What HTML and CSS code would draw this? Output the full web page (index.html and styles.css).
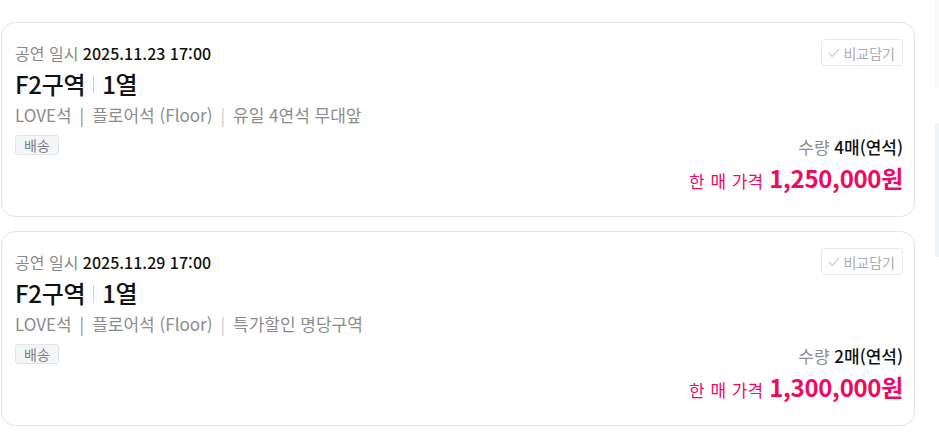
FILE: index.html
```html
<!DOCTYPE html>
<html lang="ko">
<head>
<meta charset="utf-8">
<link rel="stylesheet" href="styles.css">
</head>
<body>
<div class="page">
  <div class="list">
    <div class="card">
      <div class="info">
        <div class="date"><span class="label">공연 일시</span> <span class="value">2025.11.23 17:00</span></div>
        <div class="title">F2구역<span class="bar"></span>1열</div>
        <div class="sub">LOVE석<span class="pipe">|</span>플로어석 (Floor)<span class="pipe thin">|</span>유일 4연석 무대앞</div>
        <div class="tags"><span class="tag">배송</span></div>
      </div>
      <div class="side">
        <button class="compare"><svg class="check" viewBox="0 0 12 10" width="12" height="10"><path d="M1 5.2 L4.3 8.3 L11 1.3" fill="none" stroke="#d4d7dc" stroke-width="1.6"/></svg>비교담기</button>
        <div class="price-box">
          <div class="qty"><span class="qlabel">수량</span> <span class="qval">4매(연석)</span></div>
          <div class="price"><span class="plabel">한 매 가격</span> <span class="pval">1,250,000원</span></div>
        </div>
      </div>
    </div>
    <div class="card">
      <div class="info">
        <div class="date"><span class="label">공연 일시</span> <span class="value">2025.11.29 17:00</span></div>
        <div class="title">F2구역<span class="bar"></span>1열</div>
        <div class="sub">LOVE석<span class="pipe">|</span>플로어석 (Floor)<span class="pipe thin">|</span>특가할인 명당구역</div>
        <div class="tags"><span class="tag">배송</span></div>
      </div>
      <div class="side">
        <button class="compare"><svg class="check" viewBox="0 0 12 10" width="12" height="10"><path d="M1 5.2 L4.3 8.3 L11 1.3" fill="none" stroke="#d4d7dc" stroke-width="1.6"/></svg>비교담기</button>
        <div class="price-box">
          <div class="qty"><span class="qlabel">수량</span> <span class="qval">2매(연석)</span></div>
          <div class="price"><span class="plabel">한 매 가격</span> <span class="pval">1,300,000원</span></div>
        </div>
      </div>
    </div>
  </div>
  <div class="aside">
    <div class="aside-top"></div>
    <div class="aside-panel"></div>
  </div>
</div>
</body>
</html>
```
FILE: styles.css
```css
* { box-sizing: border-box; }
html, body { margin: 0; padding: 0; background: #fff; }
body {
  font-family: "Noto Sans CJK KR", "Noto Sans", sans-serif;
  color: #111;
  width: 939px;
  height: 444px;
  overflow: hidden;
}
.page {
  display: flex;
  padding-top: 22px;
  padding-left: 1px;
}
.list {
  width: 916px;
  display: flex;
  flex-direction: column;
  gap: 14px;
}
.card {
  height: 195px;
  border: 1px solid #e4e4e4;
  border-radius: 14px;
  padding: 15px 11px 18px 13px;
  display: flex;
  justify-content: space-between;
}
.info { display: flex; flex-direction: column; }
.date { font-size: 16px; line-height: 30px; height: 30px; }
.label { color: #8a8a8a; }
.value { color: #111; font-weight: 500; }
.title {
  font-size: 24px;
  line-height: 32px;
  font-weight: 500;
  display: flex;
  align-items: center;
  letter-spacing: -0.3px;
}
.bar {
  width: 1px;
  height: 17px;
  background: #d0d0d0;
  margin: 0 8px 0 8px;
}
.sub {
  font-size: 17px;
  line-height: 30px;
  color: #8c8c8c;
}
.pipe { margin: 0 8px; color: #8c8c8c; }
.pipe.thin { color: #c8c8c8; }
.tags { margin-top: 2px; }
.tag {
  display: inline-block;
  font-size: 14px;
  line-height: 16px;
  padding: 1px 8px;
  color: #7a7f87;
  background: #f4f5f7;
  border: 1px solid #e1e4e8;
  border-radius: 3px;
}
.side {
  display: flex;
  flex-direction: column;
  align-items: flex-end;
  justify-content: space-between;
}
.compare {
  display: flex;
  align-items: center;
  gap: 3px;
  height: 27px;
  padding: 0 7px 0 6px;
  background: #fff;
  border: 1px solid #e6e8eb;
  border-radius: 4px;
  font-family: inherit;
  font-size: 14px;
  color: #a9adb3;
  margin-top: 1px;
}
.price-box { display: flex; flex-direction: column; align-items: flex-end; }
.qty { font-size: 17px; line-height: 28px; }
.qlabel { color: #8c8c8c; }
.qval { color: #111; font-weight: 500; }
.price { line-height: 34px; display: flex; align-items: baseline; gap: 6px; }
.plabel { font-size: 17px; color: #ee0a61; word-spacing: 1px; }
.pval { font-size: 24px; font-weight: 700; color: #ee0a61; letter-spacing: -0.3px; }
.aside {
  margin-left: 20px;
  width: 4px;
  display: flex;
  flex-direction: column;
  margin-top: -22px;
}
.aside-top { height: 88px; background: #f9f9f9; }
.aside-panel { margin-top: 35px; height: 134px; background: #eff4fb; }
```
